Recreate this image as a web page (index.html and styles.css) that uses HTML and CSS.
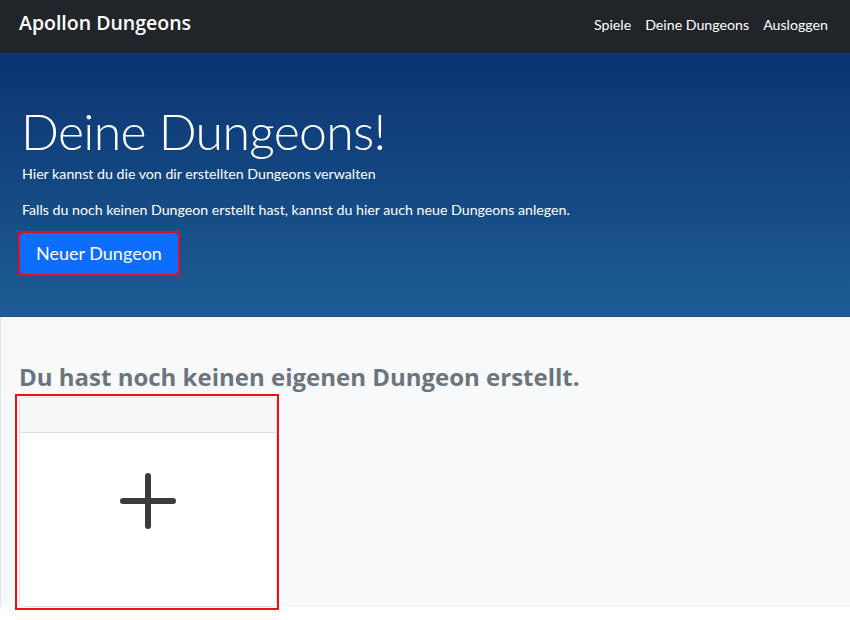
FILE: index.html
```html
<!DOCTYPE html>
<html lang="de">
<head>
<meta charset="utf-8">
<title>Apollon Dungeons</title>
<link rel="stylesheet" href="styles.css">
</head>
<body>
<nav class="navbar">
  <a class="brand" href="#">Apollon Dungeons</a>
  <ul class="nav">
    <li><a href="#">Spiele</a></li>
    <li><a href="#">Deine Dungeons</a></li>
    <li><a href="#">Ausloggen</a></li>
  </ul>
</nav>
<header class="hero">
  <h1 class="hero-title">Deine Dungeons!</h1>
  <p class="hero-text">Hier kannst du die von dir erstellten Dungeons verwalten</p>
  <p class="hero-text">Falls du noch keinen Dungeon erstellt hast, kannst du hier auch neue Dungeons anlegen.</p>
  <div class="btn-mark"><button class="btn-new">Neuer Dungeon</button></div>
</header>
<main class="main">
  <h2 class="empty-title">Du hast noch keinen eigenen Dungeon erstellt.</h2>
  <div class="card-mark">
    <div class="card">
      <div class="card-header"></div>
      <div class="card-body">
        <svg class="plus" width="60" height="60" viewBox="0 0 60 60">
          <path d="M30 5 V55 M5 30 H55" stroke="#3b3b3b" stroke-width="6" stroke-linecap="round" fill="none"/>
        </svg>
      </div>
    </div>
  </div>
</main>
</body>
</html>
```
FILE: styles.css
```css
html, body {
  margin: 0;
  padding: 0;
  background: #ffffff;
  font-family: "Lato", "Open Sans", sans-serif;
}

body {
  min-height: 620px;
}

.navbar {
  height: 53px;
  background: #212529;
  display: flex;
  align-items: center;
  justify-content: space-between;
  padding: 0 15px 0 19px;
  box-sizing: border-box;
}

.brand {
  color: #fff;
  text-decoration: none;
  font-family: "Open Sans", sans-serif;
  font-size: 19.5px;
  font-weight: 600;
  margin-top: -8px;
}

.nav {
  list-style: none;
  margin: -5px 0 0 0;
  padding: 0;
  display: flex;
}

.nav a {
  display: block;
  color: #fff;
  text-decoration: none;
  font-size: 14.2px;
  padding: 0 7px;
}

.hero {
  background: linear-gradient(to bottom, #0b3471 0%, #1d5c94 100%);
  border-bottom: 1px solid #16528a;
  padding: 48px 22px 40px 22px;
  color: #fff;
}

.hero-title {
  margin: 0 0 4px -1px;
  font-size: 50px;
  font-weight: 300;
  letter-spacing: -0.7px;
  line-height: 56px;
  padding-top: 2px;
}

.hero-text {
  margin: 0 0 15px 0;
  font-size: 14.2px;
  line-height: 21px;
}

.btn-mark {
  display: flex;
  width: fit-content;
  margin: -4px 0 0 -4px;
  border: 2px solid #e01020;
}

.btn-new {
  background: #0d6efd;
  color: #fff;
  border: none;
  border-radius: 4px;
  font-family: inherit;
  font-size: 18px;
  padding: 7px 16px;
  line-height: 27px;
}

.main {
  background: #f8f9fa;
  border-left: 1px solid #e3e5e8;
  padding: 45px 0 0 14px;
  height: 290px;
  box-sizing: border-box;
}

.empty-title {
  margin: 0 0 3px 0;
  padding-left: 4px;
  font-family: "Open Sans", sans-serif;
  font-size: 24px;
  font-weight: 700;
  color: #6c757d;
  line-height: 29px;
}

.card-mark {
  width: fit-content;
  border: 2px solid #ee1111;
  padding: 1px 0 1px 2px;
}

.card {
  width: 258px;
  height: 210px;
  box-sizing: border-box;
  background: #fff;
  border: 1px solid #e2e2e2;
  border-radius: 4px;
  display: flex;
  flex-direction: column;
}

.card-header {
  height: 34px;
  background: #f7f7f7;
  border-bottom: 1px solid #e0e0e0;
  border-radius: 4px 4px 0 0;
}

.card-body {
  flex: 1;
  display: flex;
  align-items: center;
  justify-content: center;
  padding-bottom: 38px;
}
```
